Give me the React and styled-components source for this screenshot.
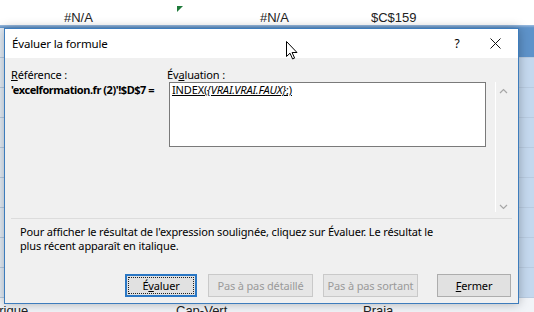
import React from 'react';
import styled, { createGlobalStyle } from 'styled-components';

const GlobalStyle = createGlobalStyle`
  html, body {
    margin: 0;
    padding: 0;
  }
  body {
    width: 534px;
    height: 312px;
    overflow: hidden;
    background: #ffffff;
    font-family: "Noto Sans", "Open Sans", sans-serif;
  }
`;

const Page = styled.div`
  position: relative;
  width: 534px;
  height: 312px;
  overflow: hidden;
`;

// ---- feuille Excel en arrière-plan ----

const Sheet = styled.div`
  display: flex;
  flex-direction: column;
  font-family: "Liberation Sans", Arial, sans-serif;
  font-size: 13px;
  color: #222;
`;

const TopRow = styled.div`
  height: 25px;
  display: grid;
  grid-template-columns: 64px 113px 83px 111px 1fr;
  background: #ffffff;
`;

const Cell = styled.div`
  position: relative;
  height: 100%;
  display: flex;
  align-items: center;
  padding-top: 9px;
  box-sizing: border-box;
`;

const ErrorMark = styled.svg`
  position: absolute;
  left: 0;
  top: 6px;
`;

const Band = styled.div`
  height: 3px;
  background: linear-gradient(to bottom, #9dbde0, #5b8fc7);
`;

const Row = styled.div`
  height: 30px;
  box-sizing: border-box;
  border-bottom: 1px solid #b9cbe0;
  display: grid;
  grid-template-columns: 176px 187px 1fr;
  align-items: start;
  background: ${(p) =>
    p.$last
      ? '#f1f4f8'
      : `linear-gradient(to right, #e3ecf6 0, #e3ecf6 519px, ${p.$first ? '#5e93ca' : '#c4d8ee'} 519px)`};
`;

const RowText = styled.span`
  margin-left: ${(p) => p.$shift || 0}px;
  padding-top: 5px;
  line-height: 16px;
`;

// ---- boîte de dialogue ----

const Dialog = styled.div`
  position: absolute;
  left: 4px;
  top: 28px;
  width: 515px;
  height: 276px;
  box-sizing: border-box;
  border: 1px solid #3d7cbc;
  background: #f0f0f0;
  box-shadow: 0 0 10px rgba(0, 0, 0, 0.28);
  display: flex;
  flex-direction: column;
  font-size: 11px;
  letter-spacing: -0.15px;
  color: #000;
  white-space: nowrap;
`;

const TitleBar = styled.div`
  height: 29px;
  background: #ffffff;
  display: flex;
  align-items: center;
  padding-left: 7px;
`;

const Title = styled.span`
  flex: 1;
  font-size: 11.5px;
  padding-bottom: 1px;
`;

const CaptionButton = styled.div`
  width: ${(p) => p.$w}px;
  height: 29px;
  display: flex;
  align-items: center;
  justify-content: center;
  font-size: 12px;
`;

const Body = styled.div`
  flex: 1;
  display: flex;
  flex-direction: column;
  padding: 9px 6px 0 6px;
`;

const Grid = styled.div`
  display: grid;
  grid-template-columns: 158px 317px 9px 16px;
  grid-template-rows: 15px 65px 65px;
`;

const Label = styled.div`
  line-height: 15px;
  margin-left: ${(p) => p.$indent || 0}px;
`;

const RefText = styled.div`
  font-weight: 700;
  line-height: 16px;
  letter-spacing: -0.45px;
`;

const Box = styled.div`
  grid-row: 2;
  grid-column: 2;
  background: #ffffff;
  border: 1px solid #7a7a7a;
  padding: 0 2px;
  line-height: 14px;
`;

const Expr = styled.span`
  text-decoration: underline;
`;

const Scroll = styled.div`
  grid-row: 2 / span 2;
  grid-column: 4;
  border-left: 1px solid #ffffff;
  display: flex;
  flex-direction: column;
  justify-content: space-between;
  align-items: center;
  padding: 6px 0 2px 0;
  height: 130px;
  box-sizing: border-box;
`;

const Separator = styled.div`
  height: 1px;
  background: #dcdcdc;
  margin-top: 6px;
`;

const Description = styled.p`
  margin: 6px 0 0 9px;
  line-height: 14px;
  white-space: normal;
  width: 432px;
`;

const Buttons = styled.div`
  display: flex;
  margin-top: auto;
  margin-bottom: 6px;
  padding-left: 114px;
`;

const Button = styled.div`
  width: ${(p) => p.$w}px;
  height: 23px;
  box-sizing: border-box;
  margin-left: ${(p) => p.$gap || 0}px;
  display: flex;
  align-items: center;
  justify-content: center;
  background: ${(p) => (p.$disabled ? '#e6e6e6' : '#e1e1e1')};
  border: ${(p) => (p.$focused ? '2px solid #2a77c4' : p.$disabled ? '1px solid #c9c9c9' : '1px solid #adadad')};
  color: ${(p) => (p.$disabled ? '#9a9a9a' : '#000')};
  position: relative;

  ${(p) =>
    p.$focused &&
    `&::after {
      content: '';
      position: absolute;
      inset: 1px;
      border: 1px dotted #222;
    }`}
`;

const Key = styled.span`
  text-decoration: underline;
`;

const Cursor = styled.svg`
  position: absolute;
  left: 286px;
  top: 41px;
`;

const Chevron = ({ up }) => (
  <svg width="9" height="6" viewBox="0 0 9 6">
    <path d={up ? 'M1 5 L4.5 1.5 L8 5' : 'M1 1 L4.5 4.5 L8 1'} fill="none" stroke="#a6a6a6" strokeWidth="1.2" />
  </svg>
);

const rows = Array.from({ length: 10 }, (_, i) => i);

const App = () => {
  return (
    <Page>
      <GlobalStyle />
      <Sheet>
        <TopRow>
          <Cell />
          <Cell>#N/A</Cell>
          <Cell>
            <ErrorMark width="6" height="6" viewBox="0 0 6 6">
              <path d="M0 0 H6 L0 6 Z" fill="#1f7a3a" />
            </ErrorMark>
          </Cell>
          <Cell>#N/A</Cell>
          <Cell>$C$159</Cell>
        </TopRow>
        <Band />
        {rows.map((i) =>
          i === 9 ? (
            <Row key={i} $last>
              <RowText $shift={-13}>Afrique</RowText>
              <RowText>Cap-Vert</RowText>
              <RowText>Praia</RowText>
            </Row>
          ) : (
            <Row key={i} $first={i === 0} />
          )
        )}
      </Sheet>

      <Dialog>
        <TitleBar>
          <Title>Évaluer la formule</Title>
          <CaptionButton $w={30}>?</CaptionButton>
          <CaptionButton $w={46}>
            <svg width="11" height="11" viewBox="0 0 11 11">
              <path d="M0.5 0.5 L10.5 10.5 M10.5 0.5 L0.5 10.5" stroke="#111" strokeWidth="1" />
            </svg>
          </CaptionButton>
        </TitleBar>
        <Body>
          <Grid>
            <Label>
              <Key>R</Key>éférence :
            </Label>
            <Label $indent={-2}>
              Év<Key>a</Key>luation :
            </Label>
            <div />
            <div />
            <RefText>'excelformation.fr (2)'!$D$7 =</RefText>
            <Box>
              <Expr>
                INDEX(<i>{'{VRAI.VRAI.FAUX}'}</i>;)
              </Expr>
            </Box>
            <Scroll>
              <Chevron up />
              <Chevron />
            </Scroll>
          </Grid>
          <Separator />
          <Description>
            Pour afficher le résultat de l'expression soulignée, cliquez sur Évaluer. Le résultat le plus récent
            apparaît en italique.
          </Description>
          <Buttons>
            <Button $w={72} $focused>
              É<Key>v</Key>aluer
            </Button>
            <Button $w={105} $gap={11} $disabled>
              Pas à pas détaillé
            </Button>
            <Button $w={95} $gap={10} $disabled>
              Pas à pas sortant
            </Button>
            <Button $w={74} $gap={19}>
              <Key>F</Key>ermer
            </Button>
          </Buttons>
        </Body>
      </Dialog>

      <Cursor width="12" height="19" viewBox="0 0 12 19">
        <path d="M0.5 0.5 L0.5 15.5 L4 12.2 L6.6 18 L8.6 17.1 L6.1 11.5 L11 11.5 Z" fill="#ffffff" stroke="#000" strokeWidth="1" />
      </Cursor>
    </Page>
  );
};

export default App;
